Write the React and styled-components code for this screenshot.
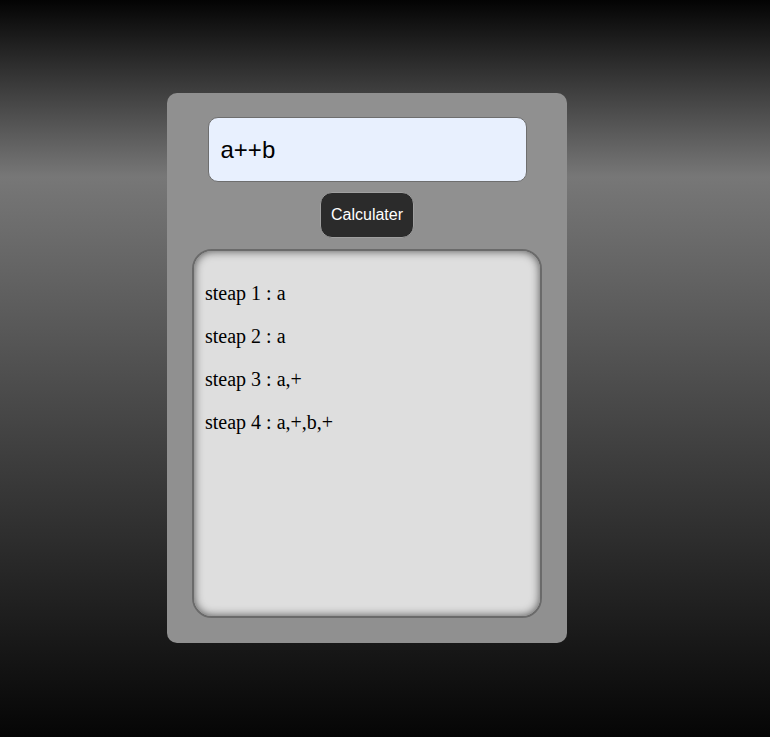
import React, { useState } from 'react';
import styled, { createGlobalStyle } from 'styled-components';

const GlobalStyle = createGlobalStyle`
  html, body {
    margin: 0;
    padding: 0;
  }
  body {
    min-height: 737px;
    background: linear-gradient(to bottom, #030303 0%, #777777 24%, #050505 100%);
    font-family: "Liberation Serif", "Times New Roman", serif;
  }
`

const Page = styled.div`
  padding: 93px 0 0 167px;
  height: 737px;
  box-sizing: border-box;
`

const Card = styled.div`
  width: 400px;
  height: 550px;
  box-sizing: border-box;
  background-color: #909090;
  border-radius: 10px;
  padding: 24px 25px 25px;
  display: flex;
  flex-direction: column;
  align-items: center;
`

const ExprInput = styled.input`
  width: 319px;
  height: 65px;
  box-sizing: border-box;
  background-color: #e8f0fe;
  border: 1px solid #6e6e6e;
  border-radius: 10px;
  padding: 0 12px;
  font-family: "Liberation Sans", Arial, sans-serif;
  font-size: 24px;
  color: #000;
  outline: none;
`

const CalcButton = styled.button`
  margin-top: 10px;
  height: 46px;
  padding: 0 10px;
  background-color: #2b2b2b;
  color: #fff;
  border: 1px solid #a0a0a0;
  border-radius: 12px;
  font-family: "Liberation Sans", Arial, sans-serif;
  font-size: 16px;
  cursor: pointer;
`

const Output = styled.div`
  margin-top: 11px;
  width: 350px;
  flex: 1;
  box-sizing: border-box;
  background-color: #dedede;
  border: 2px solid #6a6a6a;
  border-radius: 20px;
  padding: 11px 11px;
  box-shadow: inset 0 0 10px rgba(0, 0, 0, 0.65);
  overflow: hidden;
`

const Step = styled.p`
  margin: 20px 0;
  font-size: 20px;
  color: #000;
`

const steps = ['a', 'a', 'a,+', 'a,+,b,+'];

function App() {
  const [expr, setExpr] = useState('a++b');

  return (
    <>
      <GlobalStyle />
      <Page>
        <Card>
          <ExprInput value={expr} onChange={e => setExpr(e.target.value)} />
          <CalcButton>Calculater</CalcButton>
          <Output>
            {steps.map((s, i) => (
              <Step key={i}>steap {i + 1} : {s}</Step>
            ))}
          </Output>
        </Card>
      </Page>
    </>
  );
}

export default App;
